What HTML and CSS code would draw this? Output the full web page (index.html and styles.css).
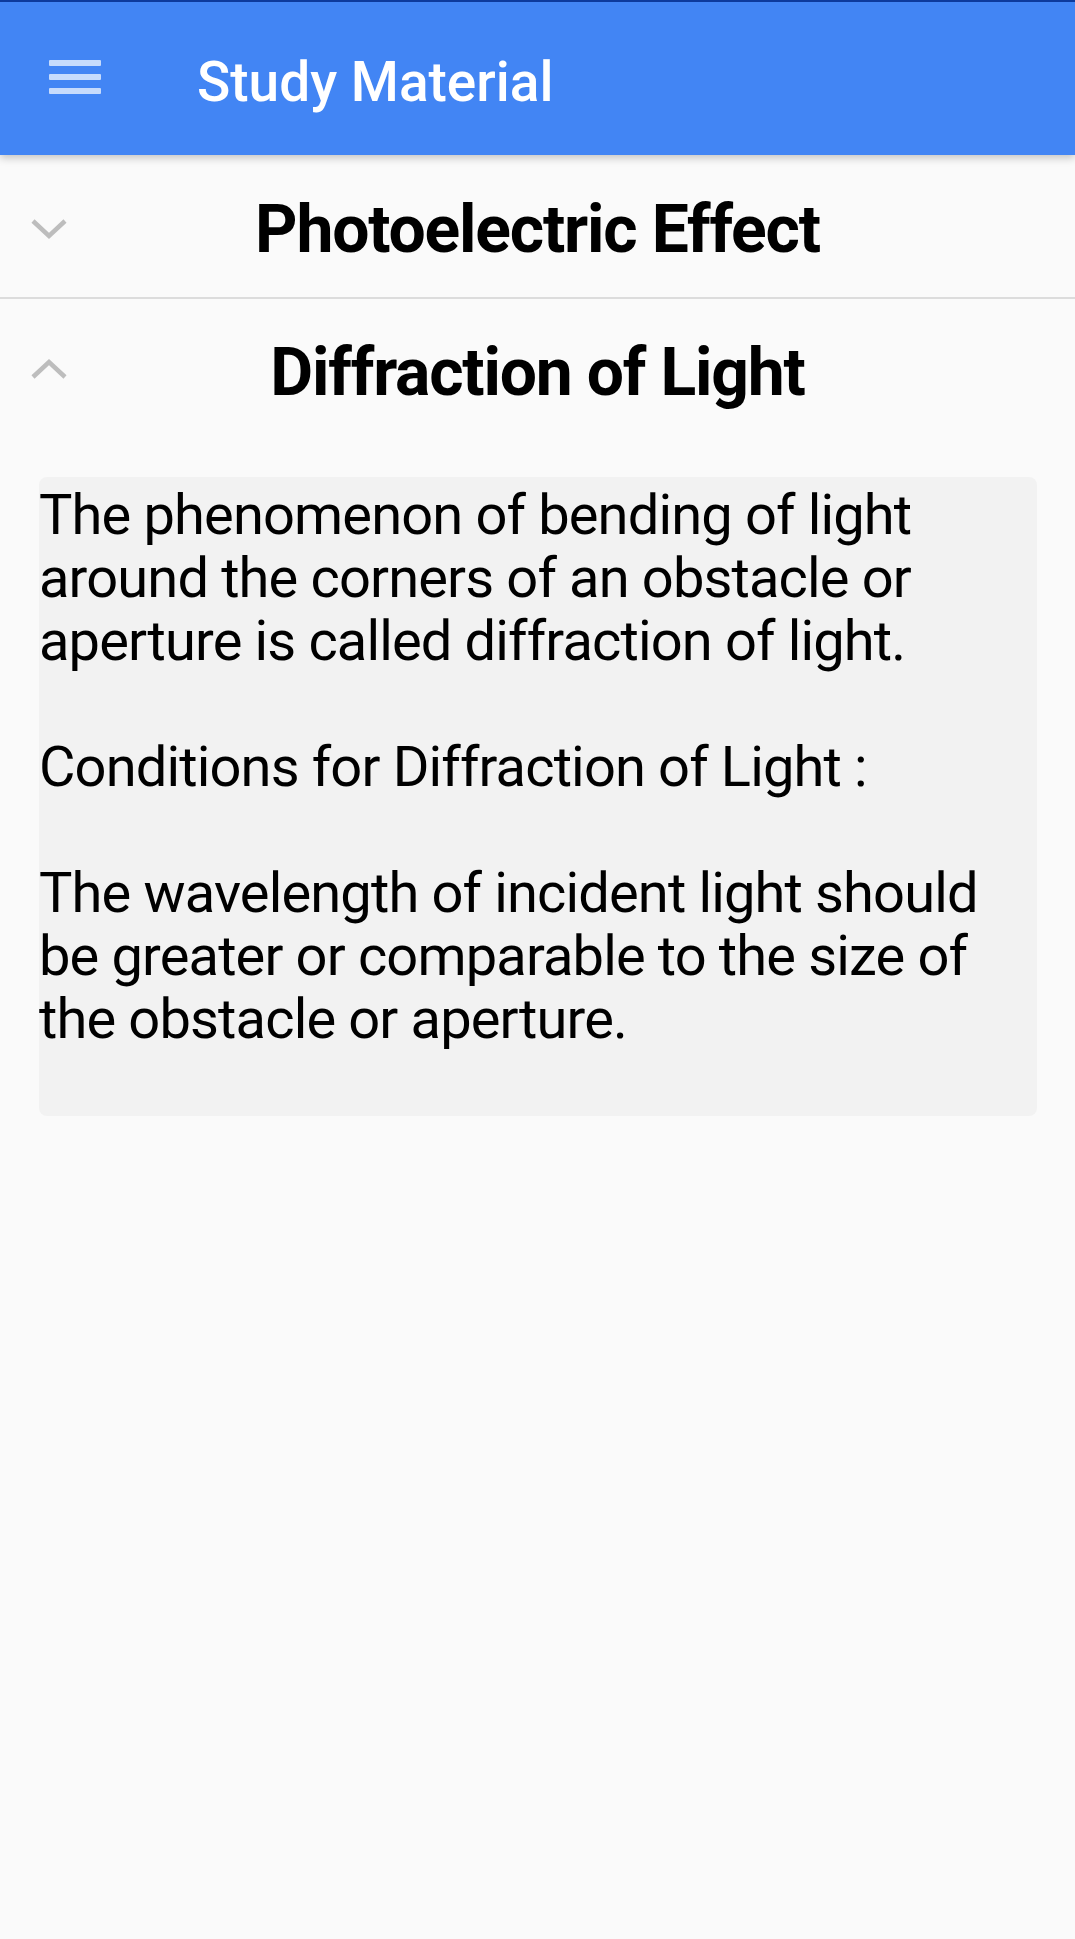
FILE: index.html
```html
<!DOCTYPE html>
<html>
<head>
<meta charset="utf-8">
<link rel="stylesheet" href="styles.css">
</head>
<body>
<header class="toolbar">
  <div class="menu-btn">
    <svg width="52" height="40" viewBox="0 0 52 40"><rect x="0" y="5" width="52" height="6" rx="1"/><rect x="0" y="19" width="52" height="6" rx="1"/><rect x="0" y="33" width="52" height="6" rx="1"/></svg>
  </div>
  <h1 class="title">Study Material</h1>
</header>
<main class="list">
  <section class="item">
    <div class="item-head">
      <svg class="chev chev-down" width="36" height="22" viewBox="0 0 36 22"><polyline points="2,3 18,18 34,3"/></svg>
      <h2 class="item-title">Photoelectric Effect</h2>
    </div>
  </section>
  <section class="item open">
    <div class="item-head">
      <svg class="chev" width="36" height="22" viewBox="0 0 36 22"><polyline points="2,19 18,4 34,19"/></svg>
      <h2 class="item-title">Diffraction of Light</h2>
    </div>
    <div class="item-body">
      <p class="content">The phenomenon of bending of light around the corners of an obstacle or aperture is called diffraction of light.<br><br>Conditions for Diffraction of Light :<br><br>The wavelength of incident light should be greater or comparable to the size of the obstacle or aperture.<br>&nbsp;</p>
    </div>
  </section>
</main>
</body>
</html>
```
FILE: styles.css
```css
* { box-sizing: border-box; }
html, body { margin: 0; padding: 0; }
body {
  background: #fafafa;
  font-family: Roboto, "Liberation Sans", sans-serif;
  width: 1075px;
  min-height: 1939px;
}
.toolbar {
  height: 155px;
  background: #4285f4;
  border-top: 2px solid #0d3a9c;
  display: flex;
  align-items: flex-start;
  box-shadow: 0 3px 8px rgba(0,0,0,0.22);
  position: relative;
}
.menu-btn {
  width: 52px;
  margin: 53px 0 0 49px;
}
.menu-btn svg { fill: rgba(255,255,255,0.7); display: block; }
.title {
  margin: 48px 0 0 96px;
  font-size: 55px;
  line-height: 64px;
  font-weight: 500;
  color: #ffffff;
}
.item-head {
  height: 140px;
  display: flex;
  align-items: center;
  justify-content: center;
  position: relative;
}
.item:first-child .item-head { border-bottom: 2px solid #dcdcdc; height: 144px; }
.chev {
  position: absolute;
  left: 31px;
  top: 50%;
  margin-top: -11px;
  fill: none;
  stroke: #bdbdbd;
  stroke-width: 4.5;
}
.chev-down { margin-top: -8px; }
.item-title {
  margin: 0;
  padding-top: 7px;
  font-size: 66px;
  font-weight: 700;
  color: #000;
  letter-spacing: -1.2px;
}
.item-body {
  padding: 38px 38px 0 39px;
}
.content {
  margin: 0;
  background: #f2f2f2;
  border-radius: 8px;
  padding: 7px 0 2px;
  font-size: 56px;
  line-height: 63px;
  letter-spacing: -0.85px;
  color: #000;
}
```
